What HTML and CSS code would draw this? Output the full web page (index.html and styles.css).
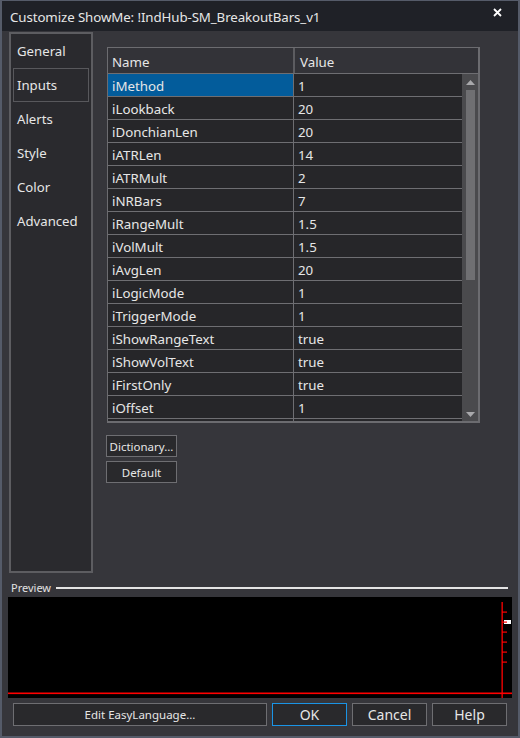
FILE: index.html
```html
<!DOCTYPE html>
<html>
<head>
<meta charset="utf-8">
<link rel="stylesheet" href="styles.css">
</head>
<body>
<div class="window">
  <div class="titlebar">
    <span class="title">Customize ShowMe: !IndHub-SM_BreakoutBars_v1</span>
    <svg class="close" width="9" height="9" viewBox="0 0 9 9"><path d="M1 1L8 8M8 1L1 8" stroke="#ffffff" stroke-width="1.8" fill="none"/></svg>
  </div>
  <div class="main">
    <div class="tabs">
      <div class="tab">General</div>
      <div class="tab selected">Inputs</div>
      <div class="tab">Alerts</div>
      <div class="tab">Style</div>
      <div class="tab">Color</div>
      <div class="tab">Advanced</div>
    </div>
    <div class="content">
      <div class="grid">
        <div class="grid-head">
          <div class="hcell name">Name</div>
          <div class="hcell value">Value</div>
        </div>
        <div class="grid-body">
          <div class="rows">
            <div class="row"><div class="cell name sel">iMethod</div><div class="cell value">1</div></div>
            <div class="row"><div class="cell name">iLookback</div><div class="cell value">20</div></div>
            <div class="row"><div class="cell name">iDonchianLen</div><div class="cell value">20</div></div>
            <div class="row"><div class="cell name">iATRLen</div><div class="cell value">14</div></div>
            <div class="row"><div class="cell name">iATRMult</div><div class="cell value">2</div></div>
            <div class="row"><div class="cell name">iNRBars</div><div class="cell value">7</div></div>
            <div class="row"><div class="cell name">iRangeMult</div><div class="cell value">1.5</div></div>
            <div class="row"><div class="cell name">iVolMult</div><div class="cell value">1.5</div></div>
            <div class="row"><div class="cell name">iAvgLen</div><div class="cell value">20</div></div>
            <div class="row"><div class="cell name">iLogicMode</div><div class="cell value">1</div></div>
            <div class="row"><div class="cell name">iTriggerMode</div><div class="cell value">1</div></div>
            <div class="row"><div class="cell name">iShowRangeText</div><div class="cell value">true</div></div>
            <div class="row"><div class="cell name">iShowVolText</div><div class="cell value">true</div></div>
            <div class="row"><div class="cell name">iFirstOnly</div><div class="cell value">true</div></div>
            <div class="row"><div class="cell name">iOffset</div><div class="cell value">1</div></div>
            <div class="row"><div class="cell name"></div><div class="cell value"></div></div>
          </div>
          <div class="scrollbar">
            <svg class="arrow" width="9" height="5" viewBox="0 0 9 5"><path d="M0 5L4.5 0L9 5Z" fill="#a8a8ab"/></svg>
            <div class="track"><div class="thumb"></div></div>
            <svg class="arrow" width="9" height="5" viewBox="0 0 9 5"><path d="M0 0L4.5 5L9 0Z" fill="#a8a8ab"/></svg>
          </div>
        </div>
      </div>
      <div class="small-buttons">
        <div class="btn small">Dictionary...</div>
        <div class="btn small">Default</div>
      </div>
    </div>
  </div>
  <div class="preview-head">
    <span class="preview-label">Preview</span>
    <div class="preview-line"></div>
  </div>
  <div class="preview">
    <svg width="504" height="101" viewBox="0 0 504 101">
      <rect x="0" y="0" width="504" height="101" fill="#000"/>
      <rect x="0" y="95.5" width="504" height="1.6" fill="#ff0000"/>
      <rect x="493.5" y="5" width="1.3" height="96" fill="#ff0000"/>
      <rect x="494" y="14.5" width="5" height="1.2" fill="#ff0000"/>
      <rect x="494" y="34.5" width="5" height="1.2" fill="#ff0000"/>
      <rect x="494" y="44.5" width="5" height="1.2" fill="#ff0000"/>
      <rect x="494" y="54.5" width="5" height="1.2" fill="#ff0000"/>
      <rect x="494" y="64.5" width="5" height="1.2" fill="#ff0000"/>
      <rect x="496" y="23" width="7" height="4" fill="#ffffff"/>
      <rect x="494" y="24.5" width="5" height="1.2" fill="#ff0000"/>
    </svg>
  </div>
  <div class="footer">
    <div class="btn big edit">Edit EasyLanguage...</div>
    <div class="btn big ok">OK</div>
    <div class="btn big">Cancel</div>
    <div class="btn big">Help</div>
  </div>
</div>
</body>
</html>
```

FILE: styles.css
```css
* { box-sizing: border-box; }
html, body { margin: 0; padding: 0; background: #36363b; }
body { font-family: "Noto Sans", "Open Sans", sans-serif; color: #e4e4e4; }

.window {
  width: 520px;
  height: 738px;
  background: #36363b;
  border-style: solid;
  border-color: #555b69;
  border-width: 1px 2px 2px 2px;
  display: flex;
  flex-direction: column;
}

.titlebar {
  height: 30px;
  background: #1f2127;
  display: flex;
  align-items: center;
  justify-content: space-between;
  padding: 1px 16px 0 8px;
}
.title { font-size: 13.3px; color: #e6e6e6; letter-spacing: -0.1px; }
.close { margin-top: -8px; }

.main {
  display: flex;
  height: 543px;
  padding: 1px 0 0 7px;
}

.tabs {
  width: 84px;
  height: 541px;
  border: 2px solid #5d5d61;
  background: #2a2a2e;
  padding: 0 2px;
}
.tab {
  height: 34px;
  line-height: 33px;
  padding-left: 3px;
  font-size: 13.2px;
  color: #e6e6e6;
  border: 1px solid transparent;
}
.tab.selected { border-color: #58585c; }

.content {
  padding: 15px 0 0 14px;
  display: flex;
  flex-direction: column;
}

.grid {
  width: 373px;
  height: 376px;
  border-style: solid;
  border-color: #6c6c70;
  border-width: 1px 2px 2px 1px;
  background: #36363b;
  overflow: hidden;
}
.grid-head {
  display: flex;
  height: 26px;
  background: #333338;
  border-bottom: 1px solid #6e6e72;
}
.hcell {
  font-size: 13.3px;
  line-height: 28px;
  padding-left: 4px;
  color: #e6e6e6;
}
.hcell.name { width: 187px; border-right: 2px solid #5c5c60; }
.hcell.value { flex: 1; padding-left: 5px; }

.grid-body { display: flex; }
.rows { width: 354px; }
.row { display: flex; height: 23px; border-bottom: 1px solid #6e6e72; }
.cell {
  font-size: 13.3px;
  line-height: 24px;
  padding-left: 4px;
  background: #262629;
  color: #e6e6e6;
  white-space: nowrap;
}
.cell.name { width: 186px; border-right: 1px solid #6e6e72; }
.cell.value { flex: 1; padding-left: 4px; }
.cell.sel { background: #035c9b; }

.scrollbar {
  width: 16px;
  height: 348px;
  background: #4a4a4d;
  display: flex;
  flex-direction: column;
  align-items: center;
  padding: 6px 0 5px;
}
.scrollbar .arrow { flex: none; }
.track { flex: 1; width: 100%; padding: 5px 3px 0 4px; }
.thumb { height: 190px; background: #6f6f72; }

.small-buttons {
  display: flex;
  flex-direction: column;
  gap: 4px;
  margin: 12px 0 0 -1px;
}
.btn {
  border: 1px solid #6e6e72;
  background: #29292c;
  color: #e6e6e6;
  display: flex;
  align-items: center;
  justify-content: center;
}
.btn.small { width: 71px; height: 22px; font-size: 11.5px; }

.preview-head {
  display: flex;
  align-items: center;
  height: 16px;
  margin-top: 5px;
  padding-left: 9px;
}
.preview-label { font-size: 11px; color: #e2e2e2; }
.preview-line {
  flex: 1;
  height: 2px;
  margin: 1px 10px 0 5px;
  background: #e4e4e4;
}
.preview {
  margin: 2px 0 0 6px;
  width: 504px;
  height: 101px;
}
.preview svg { display: block; }

.footer {
  display: flex;
  gap: 5px;
  padding-left: 11px;
  margin-top: 5px;
}
.btn.big { height: 23px; width: 75px; font-size: 14px; }
.btn.big.edit { width: 254px; font-size: 11.5px; }
.btn.ok { border-color: #1a94e6; }
```
